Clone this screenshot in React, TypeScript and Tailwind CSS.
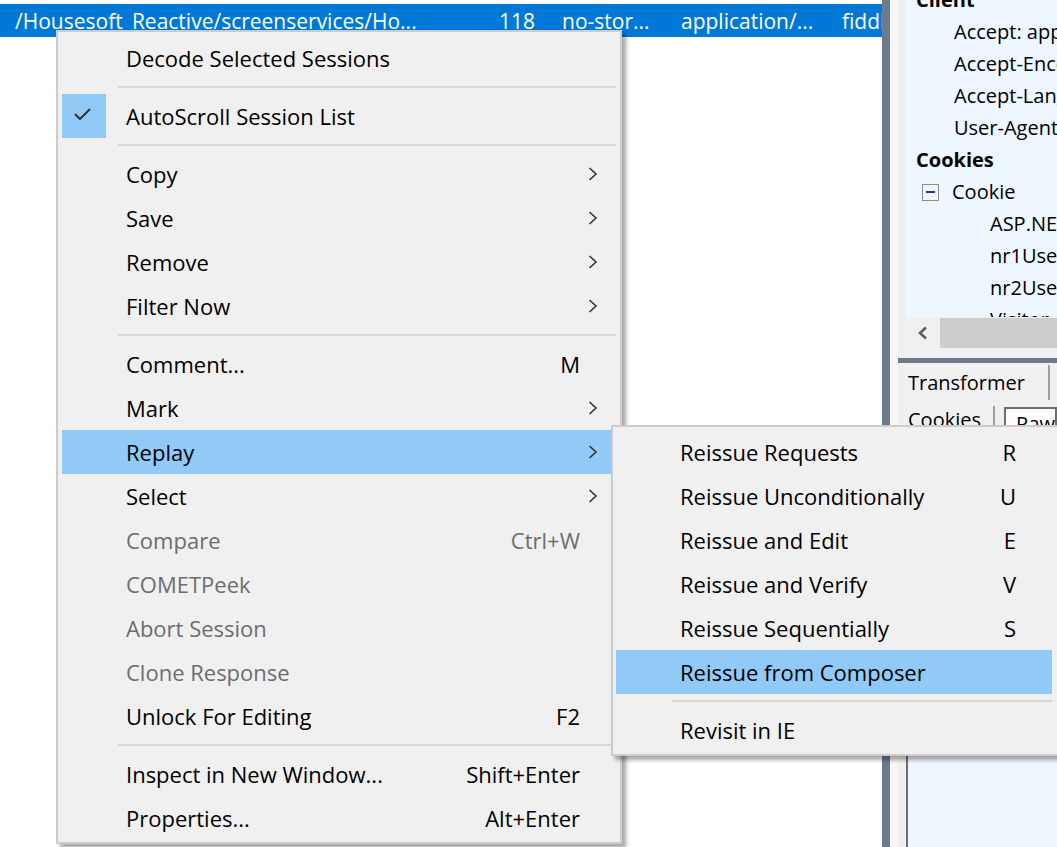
import React from "react";

type MenuEntry =
  | { sep: true }
  | {
      sep?: false;
      label: string;
      shortcut?: string;
      sub?: boolean;
      disabled?: boolean;
      active?: boolean;
      checked?: boolean;
    };

const mainMenu: MenuEntry[] = [
  { label: "Decode Selected Sessions" },
  { sep: true },
  { label: "AutoScroll Session List", checked: true },
  { sep: true },
  { label: "Copy", sub: true },
  { label: "Save", sub: true },
  { label: "Remove", sub: true },
  { label: "Filter Now", sub: true },
  { sep: true },
  { label: "Comment...", shortcut: "M" },
  { label: "Mark", sub: true },
  { label: "Replay", sub: true, active: true },
  { label: "Select", sub: true },
  { label: "Compare", shortcut: "Ctrl+W", disabled: true },
  { label: "COMETPeek", disabled: true },
  { label: "Abort Session", disabled: true },
  { label: "Clone Response", disabled: true },
  { label: "Unlock For Editing", shortcut: "F2" },
  { sep: true },
  { label: "Inspect in New Window...", shortcut: "Shift+Enter" },
  { label: "Properties...", shortcut: "Alt+Enter" },
];

const replayMenu: MenuEntry[] = [
  { label: "Reissue Requests", shortcut: "R" },
  { label: "Reissue Unconditionally", shortcut: "U" },
  { label: "Reissue and Edit", shortcut: "E" },
  { label: "Reissue and Verify", shortcut: "V" },
  { label: "Reissue Sequentially", shortcut: "S" },
  { label: "Reissue from Composer", active: true },
  { sep: true },
  { label: "Revisit in IE" },
];

const Chevron = () => (
  <svg width="10" height="14" viewBox="0 0 10 14" className="absolute right-[18px] top-[15px]">
    <path d="M1.5 1 L8 7 L1.5 13" fill="none" stroke="#333" strokeWidth="1.6" />
  </svg>
);

const Check = () => (
  <svg width="44" height="44" viewBox="0 0 44 44">
    <path d="M13 20 L18 25 L28 15" fill="none" stroke="#333" strokeWidth="2" />
  </svg>
);

function MenuRows({ items }: { items: MenuEntry[] }) {
  return (
    <>
      {items.map((it, i) =>
        it.sep ? (
          <div key={i} className="flex h-[14px] items-center pl-[56px]">
            <div className="h-[2px] w-full bg-[#d7d7d7]" />
          </div>
        ) : (
          <div
            key={i}
            className={`relative flex h-[44px] items-center ${it.active ? "bg-[#91c9f7]" : ""}`}
          >
            {it.checked && (
              <div className="absolute left-0 top-0 h-[44px] w-[44px] bg-[#91c9f7]">
                <Check />
              </div>
            )}
            <span className={`pl-[64px] ${it.disabled ? "text-[#6d6d6d]" : "text-black"}`}>
              {it.label}
            </span>
            {it.shortcut && (
              <span className={`ml-auto pr-[36px] ${it.disabled ? "text-[#6d6d6d]" : "text-black"}`}>
                {it.shortcut}
              </span>
            )}
            {it.sub && <Chevron />}
          </div>
        )
      )}
    </>
  );
}

const treeRows: { text: string; indent: number; bold?: boolean; box?: boolean }[] = [
  { text: "Client", indent: 10, bold: true },
  { text: "Accept: application/json", indent: 48 },
  { text: "Accept-Encoding: gzip", indent: 48 },
  { text: "Accept-Language: en-US", indent: 48 },
  { text: "User-Agent: Mozilla/5.0", indent: 48 },
  { text: "Cookies", indent: 10, bold: true },
  { text: "Cookie", indent: 47, box: true },
  { text: "ASP.NET_SessionId", indent: 84 },
  { text: "nr1Users", indent: 84 },
  { text: "nr2Users", indent: 84 },
  { text: "Visitor", indent: 84 },
];

export default function App() {
  return (
    <div className="relative h-[847px] w-[1057px] overflow-hidden bg-white font-['Segoe_UI','Open_Sans',sans-serif]">
      <div className="flex h-full">
        {/* session list */}
        <div className="w-[882px] shrink-0 overflow-hidden pt-[4px]">
          <div className="flex h-[33px] items-center overflow-hidden whitespace-nowrap bg-[#0078d7] pt-[2px] text-[21px] text-white">
            <span className="w-[470px] shrink-0 pl-[15px]">/Housesoft_Reactive/screenservices/Ho...</span>
            <span className="w-[65px] shrink-0 text-right">118</span>
            <span className="w-[146px] shrink-0 pl-[27px]">no-stor...</span>
            <span className="w-[161px] shrink-0">application/...</span>
            <span className="shrink-0">fiddler...</span>
          </div>
        </div>

        {/* inspector side */}
        <div className="w-[8px] shrink-0 bg-[#6b7b8b]" />
        <div className="w-[8px] shrink-0 bg-[#f7f7f7]" />
        <div className="flex flex-1 flex-col overflow-hidden whitespace-nowrap bg-[#f0f0f0] text-[20px] text-black">
          <div className="ml-[8px] h-[317px] overflow-hidden bg-[#eef6fe]">
            <div className="-mt-[16px]">
              {treeRows.map((r, i) => (
                <div key={i} className="flex h-[32px] items-center" style={{ paddingLeft: r.box ? 16 : r.indent }}>
                  {r.box && (
                    <div className="mr-[13px] flex h-[17px] w-[17px] items-center justify-center border border-[#8c8c8c] bg-[#f4f4f4]">
                      <div className="h-[2px] w-[9px] bg-[#1e3a8a]" />
                    </div>
                  )}
                  <span className={r.bold ? "font-bold" : ""}>{r.text}</span>
                </div>
              ))}
            </div>
          </div>
          <div className="flex h-[31px] pl-[8px]">
            <div className="flex w-[34px] items-center justify-center">
              <svg width="12" height="14" viewBox="0 0 12 14">
                <path d="M9 1.5 L3 7 L9 12.5" fill="none" stroke="#606060" strokeWidth="2.6" />
              </svg>
            </div>
            <div className="mt-[1px] flex-1 bg-[#cdcdcd]" />
          </div>
          <div className="h-[10px]" />
          <div className="h-[5px] bg-[#6b7b8b]" />
          <div className="flex h-[40px]">
            <div className="flex w-[150px] items-center pl-[10px]">Transformer</div>
            <div className="mt-[2px] h-[35px] w-[2px] bg-[#a0a0a0]" />
          </div>
          <div className="flex h-[40px]">
            <div className="w-[107px] pl-[10px] pt-[2px]">Cookies</div>
            <div className="mt-[3px] h-[30px] w-[2px] bg-[#a0a0a0]" />
            <div className="ml-[9px] mt-[4px] h-[30px] flex-1 border-2 border-[#6e6e6e] bg-white pl-[10px]">Raw</div>
          </div>
          <div className="ml-[8px] flex-1 border-l-2 border-[#6e6e6e] bg-[#eef6fe]" />
        </div>
      </div>

      {/* context menu */}
      <div className="absolute left-[56px] top-[30px] w-[566px] border-2 border-[#cccccc] bg-[#f0f0f0] px-[4px] pb-[2px] pt-[4px] text-[22px] shadow-[4px_4px_4px_rgba(0,0,0,0.35)]">
        <MenuRows items={mainMenu} />
      </div>

      {/* replay submenu */}
      <div className="absolute left-[611px] top-[425px] w-[450px] border-2 border-[#cccccc] bg-[#f0f0f0] pb-[2px] pl-[3px] pr-[7px] pt-[3px] text-[22px] shadow-[4px_4px_4px_rgba(0,0,0,0.35)]">
        <MenuRows items={replayMenu} />
      </div>
    </div>
  );
}
